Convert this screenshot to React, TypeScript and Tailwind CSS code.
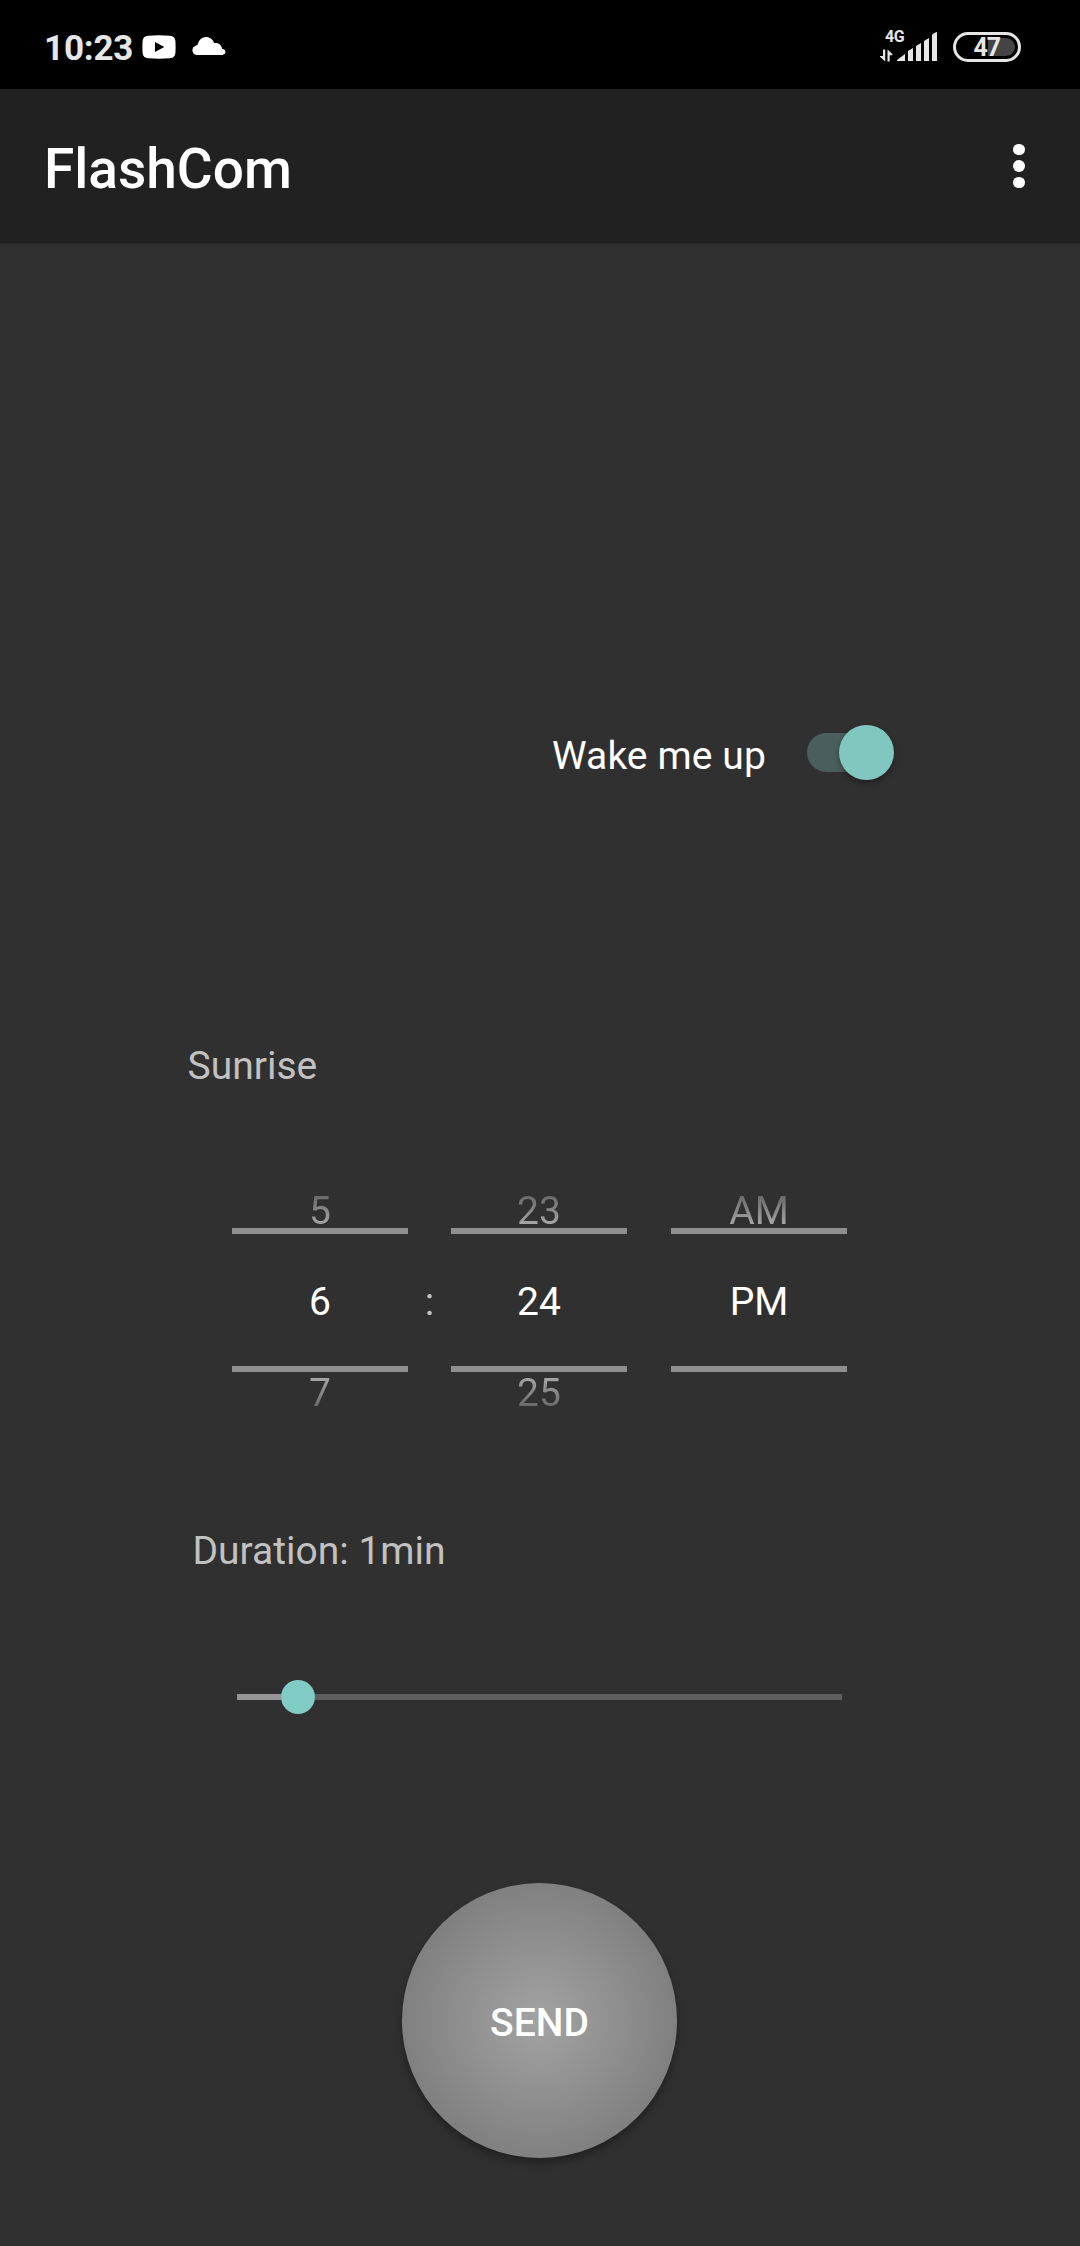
type PickerProps = { previous: string; current: string; next: string };

function StatusBar() {
  return (
    <header className="flex h-[89px] items-start justify-between bg-black pr-[59px] pl-[44px] text-[#e6e6e6]">
      <div className="flex">
        <span className="mt-[28px] w-[98px] text-[35px] leading-[42px] font-bold tracking-[-0.2px] whitespace-nowrap">10:23</span>
        <svg className="mt-[35px]" width="34" height="24" viewBox="0 0 34 24" aria-label="YouTube">
          <path
            fillRule="evenodd"
            fill="#fff"
            d="M6 .7Q17-.3 28 .7Q33 1 33.4 6Q33.8 12 33.4 18Q33 23 28 23.3Q17 24.2 6 23.3Q1 23 .6 18Q.2 12 .6 6Q1 1 6 .7ZM13 7V17L22.3 12Z"
          />
        </svg>
        <svg className="mt-[37px] ml-4" width="34" height="18" viewBox="0 0 34 18" aria-label="Cloud">
          <path
            fill="#fff"
            d="M4.6 17.9A4.6 4.6 0 0 1 3.2 9.1Q4.5 8.2 5.6 7.7C7 2.8 10 0 14 0C17.8 0 20.8 2.2 22.2 6.1C26.2 5.3 30 8 30 12.1C32.2 11.8 33.5 13.3 33.4 15.1C33.3 16.8 32 17.9 30.2 17.9Z"
          />
        </svg>
      </div>
      <div className="flex pt-[30px]">
        <div className="flex w-[58px]">
          <div className="flex w-[16px] flex-col">
            <span className="-mt-[3px] ml-[5px] text-[16px] leading-[19px] font-bold tracking-[-0.4px]">4G</span>
            <svg className="mt-[3px]" width="14" height="13" viewBox="0 0 14 13" fill="#e6e6e6">
              <path d="M3 .5H5.2V12.5L0 7.8V7H3ZM7.5.5L12.4 5V6.2H9.7V12.5H7.5Z" />
            </svg>
          </div>
          <svg className="mt-[2px]" width="42" height="30" viewBox="0 0 42 30" fill="#e6e6e6">
            <path d="M1 29V28L9 22V29ZM12 29V19L17 16V29ZM20 29V14L25 11V29ZM28 29V9L33 6V29ZM36 29V3.5Q36 1.5 41 0V29Z" />
          </svg>
        </div>
        <div className="relative mt-[2px] ml-[15px] h-[30px] w-[68px] rounded-full border-[3px] border-[#e6e6e6]">
          <div className="absolute top-[3px] right-[3px] h-[18px] w-[27px] rounded-r-full bg-[#444]" />
          <span className="absolute top-[-2px] left-[17.5px] text-[25px] leading-[29px] font-bold tracking-[-1.2px]">47</span>
        </div>
      </div>
    </header>
  );
}

function AppBar() {
  return (
    <div className="flex h-[154px] items-start justify-between bg-[#212121] pr-[55.5px] pl-[44px] shadow-[0_2px_4px_rgba(0,0,0,0.12)]">
      <h1 className="mt-[48px] text-[55px] leading-[64px] font-medium text-white">FlashCom</h1>
      <button aria-label="More options" className="mt-[54.5px] flex flex-col gap-[5px]">
        <span className="size-[11.5px] rounded-full bg-white" />
        <span className="size-[11.5px] rounded-full bg-white" />
        <span className="size-[11.5px] rounded-full bg-white" />
      </button>
    </div>
  );
}

function PickerColumn({ previous, current, next }: PickerProps) {
  return (
    <div className="flex w-[176px] flex-col items-center">
      <span className="h-[40px] bg-linear-to-b from-[#6a6a6a] from-[8px] to-[#a6a6a6] to-[36px] bg-clip-text text-transparent">
        {previous}
      </span>
      <span className="h-[6px] w-full bg-[#8f8f8f]" />
      <span className="flex h-[132px] items-start pt-[45px] text-white">{current}</span>
      <span className="h-[6px] w-full bg-[#8f8f8f]" />
      <span className="-mt-[2px] h-[45px] bg-linear-to-b from-[#a6a6a6] from-[8px] to-[#6a6a6a] to-[36px] bg-clip-text text-transparent">
        {next}
      </span>
    </div>
  );
}

export default function App() {
  return (
    <div className="flex h-[2246px] w-[1080px] flex-col overflow-hidden bg-[#303030] font-[Roboto,sans-serif] text-[39px] leading-[46px] text-[#c1c1c1]">
      <StatusBar />
      <AppBar />
      <main className="flex flex-col">
        <div className="mt-[482px] ml-[552px] flex h-[56px] items-start">
          <span className="mt-[8px] w-[255px] tracking-[0.1px] text-white">Wake me up</span>
          <div role="switch" aria-checked="true" className="flex h-[56px] w-[88px] items-center">
            <span className="-mt-px h-[39px] w-[60px] rounded-full bg-[#4a5f5d]" />
            <span className="-mt-px -ml-[28px] size-[55px] rounded-full bg-[#80c7c0] shadow-[0_3px_6px_rgba(0,0,0,0.35)]" />
          </div>
        </div>
        <h2 className="mt-[262px] ml-[187.5px]">Sunrise</h2>
        <div className="mt-[99px] ml-[232px] flex">
          <PickerColumn previous="5" current="6" next="7" />
          <span className="w-[43px] pt-[91px] text-center">:</span>
          <PickerColumn previous="23" current="24" next="25" />
          <div className="w-[44px]" />
          <PickerColumn previous="AM" current="PM" next="" />
        </div>
        <p className="mt-[113px] ml-[192.5px]">Duration: 1min</p>
        <div role="slider" aria-valuenow={1} className="mt-[106px] ml-[237px] flex h-[34px] w-[605px] items-center">
          <span className="h-[6px] w-[44px] bg-[#959595]" />
          <span className="size-[34px] rounded-full bg-[#80cbc4]" />
          <span className="h-[6px] flex-1 bg-[#5e5e5e]" />
        </div>
        <button className="mt-[169px] ml-[402px] size-[275px] rounded-full bg-[radial-gradient(circle_closest-side,#a3a3a3,#808080)] pt-[5px] font-medium text-white shadow-[0_5px_9px_rgba(0,0,0,0.32)]">
          SEND
        </button>
      </main>
    </div>
  );
}
